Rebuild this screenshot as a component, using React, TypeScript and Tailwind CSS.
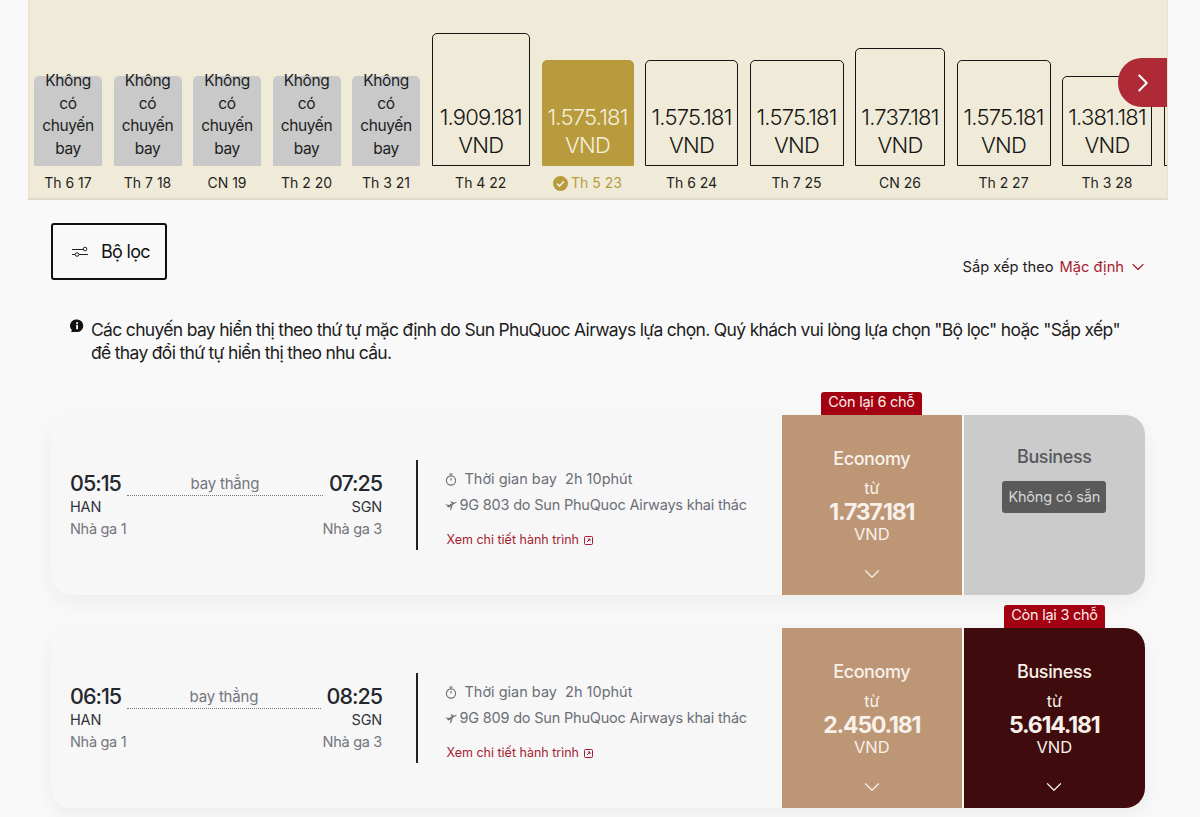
import { ChevronDown, ChevronRight } from "lucide-react";

interface DayBar {
  label: string;
  price?: string;
  width: string;
  height: string;
  selected?: boolean;
}

const DAYS: DayBar[] = [
  { label: "Th 6 17", width: "w-[68px]", height: "h-[90px]" },
  { label: "Th 7 18", width: "w-[68px]", height: "h-[90px]" },
  { label: "CN 19", width: "w-[68px]", height: "h-[90px]" },
  { label: "Th 2 20", width: "w-[68px]", height: "h-[90px]" },
  { label: "Th 3 21", width: "w-[68px]", height: "h-[90px]" },
  { label: "Th 4 22", price: "1.909.181", width: "w-[98.5px]", height: "h-[133px]" },
  { label: "Th 5 23", price: "1.575.181", width: "w-[92px]", height: "h-[106px]", selected: true },
  { label: "Th 6 24", price: "1.575.181", width: "w-[93px]", height: "h-[106px]" },
  { label: "Th 7 25", price: "1.575.181", width: "w-[94px]", height: "h-[106px]" },
  { label: "CN 26", price: "1.737.181", width: "w-[90px]", height: "h-[118px]" },
  { label: "Th 2 27", price: "1.575.181", width: "w-[94px]", height: "h-[106px]" },
  { label: "Th 3 28", price: "1.381.181", width: "w-[90px]", height: "h-[90px]" },
  { label: "", price: "", width: "w-[90px]", height: "h-[90px]" },
];

interface Flight {
  depart: string;
  arrive: string;
  code: string;
  economy: string;
  business?: string;
  seatsLeft: string;
  seatsOn: "economy" | "business";
}

const FLIGHTS: Flight[] = [
  { depart: "05:15", arrive: "07:25", code: "9G 803", economy: "1.737.181", seatsLeft: "Còn lại 6 chỗ", seatsOn: "economy" },
  { depart: "06:15", arrive: "08:25", code: "9G 809", economy: "2.450.181", business: "5.614.181", seatsLeft: "Còn lại 3 chỗ", seatsOn: "business" },
];

function CalendarBar({ day }: { day: DayBar }) {
  return (
    <div className={`${day.width} shrink-0 flex flex-col items-center`}>
      {day.price === undefined ? (
        <div className={`${day.height} w-full bg-[#c9c9c9] rounded-t-[5px] flex flex-col items-center text-[15.5px] leading-[22.6px] tracking-[-0.4px] text-[#1d1d1d] text-center`}>
          <div className="-mt-[6px]">Không</div>
          <div>có</div>
          <div>chuyến</div>
          <div>bay</div>
        </div>
      ) : (
        <div
          className={`${day.height} w-full rounded-t-[5px] border-[1.5px] flex flex-col items-center justify-end pb-[6.5px] text-[22px] leading-[28px] font-[350] tracking-[-0.8px] ${
            day.selected
              ? "bg-[#b89b3d] border-[#b89b3d] text-[#f4efdc]"
              : "border-[#151515] text-[#151515]"
          }`}
        >
          <div>{day.price}</div>
          <div>{day.price ? "VND" : ""}</div>
        </div>
      )}
      <div
        className={`mt-[8px] h-[18px] flex items-center gap-[3px] text-[14px] leading-[18px] whitespace-nowrap ${
          day.selected ? "text-[#b89b3d]" : "text-[#1f1f1f]"
        }`}
      >
        {day.selected && (
          <svg width="15" height="15" viewBox="0 0 16 16" aria-hidden="true">
            <circle cx="8" cy="8" r="8" fill="#b89b3d" />
            <path d="M4.4 8.2l2.5 2.5 4.8-5" fill="none" stroke="#f0ebd8" strokeWidth="1.8" />
          </svg>
        )}
        {day.label}
      </div>
    </div>
  );
}

function FilterIcon() {
  return (
    <svg width="18" height="12" viewBox="0 0 18 12" fill="none" stroke="#222" strokeWidth="1" aria-hidden="true">
      <path d="M1 3.5h11" />
      <circle cx="14" cy="3" r="1.8" />
      <path d="M1 8.5h3" />
      <circle cx="6" cy="8.5" r="1.8" />
      <path d="M8 8.5h9" />
    </svg>
  );
}

function InfoIcon() {
  return (
    <svg width="14" height="14" viewBox="0 0 14 14" aria-hidden="true">
      <path d="M7 .5a6.3 6.3 0 0 1 0 12.6H1l1-1.8A6.3 6.3 0 0 1 7 .5z" fill="#111" />
      <rect x="6.2" y="5.8" width="1.8" height="4.4" fill="#fff" />
      <rect x="6.2" y="3.2" width="1.8" height="1.7" fill="#fff" />
    </svg>
  );
}

function TimerIcon() {
  return (
    <svg width="12" height="13" viewBox="0 0 12 13" fill="none" stroke="#6b6f76" strokeWidth="1.1" aria-hidden="true">
      <circle cx="6" cy="7.5" r="4.6" />
      <path d="M4.4 1h3.2M6 1v1.8M6 7.5V5" />
    </svg>
  );
}

function PlaneIcon() {
  return (
    <svg width="12" height="12" viewBox="0 0 12 12" aria-hidden="true">
      <path d="M.5 5.2l3.6.8L7 4.2 5.2 2.6l1-.3 3.1 1.4 1.8-.9c.5-.2.9.3.4.7L3.6 8.4 1.8 7.8 3 6.9.8 6z" fill="#6b6f76" />
      <path d="M5.6 7l2-1.1-1.4 5-1 .4z" fill="#6b6f76" />
    </svg>
  );
}

function OpenIcon() {
  return (
    <svg width="9" height="9" viewBox="0 0 9 9" fill="none" stroke="#a51c30" strokeWidth="1" aria-hidden="true">
      <rect x=".5" y=".5" width="8" height="8" rx="1" />
      <path d="M3 6l3-3M3.8 3H6v2.2" />
    </svg>
  );
}

function FarePanel({ name, price, tone }: { name: string; price: string; tone: string }) {
  return (
    <div className={`flex-1 flex flex-col items-center text-[#f8f1ea] ${tone}`}>
      <div className="mt-[32px] text-[18px] leading-[24px] font-medium tracking-[-0.4px]">{name}</div>
      <div className="mt-[6px] text-[16px] leading-[22px]">từ</div>
      <div className="text-[23px] leading-[26px] font-bold tracking-[-1.2px]">{price}</div>
      <div className="-mt-[2px] text-[16.5px] leading-[22px]">VND</div>
      <ChevronDown className="mt-[16px]" size={26} strokeWidth={1.1} />
    </div>
  );
}

function FlightCard({ flight }: { flight: Flight }) {
  return (
    <div className="relative h-[180px] ml-[51px] w-[1094px] flex rounded-[20px] bg-[#f7f7f8] shadow-[0_6px_22px_rgba(0,0,0,0.06)]">
      <div className="w-[312px] ml-[19px] pt-[53px] shrink-0">
        <div className="flex items-end justify-between">
          <span className="text-[21.5px] leading-[30px] font-medium tracking-[-1px] text-[#24272c]">{flight.depart}</span>
          <div className="flex-1 mx-[6px] mb-[2px] pb-[1px] border-b-[1.5px] border-dotted border-[#777] text-center text-[15px] leading-[20px] tracking-[-0.2px] text-[#73767c]">
            bay thẳng
          </div>
          <span className="text-[21.5px] leading-[30px] font-medium tracking-[-1px] text-[#24272c]">{flight.arrive}</span>
        </div>
        <div className="flex justify-between text-[14.5px] leading-[21px] text-[#30343a] mt-[-2px] tracking-[-0.2px]">
          <span>HAN</span>
          <span>SGN</span>
        </div>
        <div className="flex justify-between text-[14.5px] leading-[23px] tracking-[-0.3px] text-[#73767c]">
          <span>Nhà ga 1</span>
          <span>Nhà ga 3</span>
        </div>
      </div>
      <div className="ml-[34px] mt-[45px] h-[90px] w-[1.5px] bg-[#222] shrink-0" />
      <div className="ml-[27px] w-[337px] pt-[52px] shrink-0 text-[14.5px] text-[#6b6f76]">
        <div className="flex items-center h-[24px] whitespace-nowrap">
          <TimerIcon />
          <span className="ml-[8px]">Thời gian bay&nbsp; 2h 10phút</span>
        </div>
        <div className="flex items-center gap-[3px] h-[24px] mt-[2px] whitespace-nowrap tracking-[-0.2px]">
          <PlaneIcon />
          <span>{flight.code} do Sun PhuQuoc Airways khai thác</span>
        </div>
        <div className="flex items-center gap-[5px] mt-[13px] ml-[2px] text-[12.5px] leading-[20px] text-[#a51c30] whitespace-nowrap">
          Xem chi tiết hành trình
          <OpenIcon />
        </div>
      </div>
      <div className="w-[363px] flex gap-[2px] rounded-r-[20px] overflow-hidden">
        <FarePanel name="Economy" price={flight.economy} tone="bg-[#bd9676]" />
        {flight.business ? (
          <FarePanel name="Business" price={flight.business} tone="bg-[#3f0b0d]" />
        ) : (
          <div className="flex-1 flex flex-col items-center bg-[#cbcbcb]">
            <div className="mt-[30px] text-[18px] leading-[24px] font-medium tracking-[-0.4px] text-[#55585c]">Business</div>
            <div className="mt-[12px] h-[32px] px-[6px] flex items-center rounded-[3px] bg-[#5a5a5a] text-[14.5px] tracking-[-0.2px] text-[#d7d7d7]">
              Không có sẵn
            </div>
          </div>
        )}
      </div>
      <div
        className={`absolute top-[-23px] h-[23px] w-[101px] pb-[3px] flex items-center justify-center rounded-t-[3px] bg-[#a30012] text-[14.5px] tracking-[-0.25px] text-[#f9efe9] whitespace-nowrap ${
          flight.seatsOn === "economy" ? "left-[770px]" : "left-[953px]"
        }`}
      >
        {flight.seatsLeft}
      </div>
    </div>
  );
}

export default function App() {
  return (
    <div className="h-[817px] w-[1200px] overflow-hidden bg-[#f9f9f9] font-['Inter',sans-serif]">
      <section className="relative ml-[28px] w-[1140px] h-[200px] overflow-hidden bg-[#f0ebd8] border-b-2 border-[#dfdbc8] border-x border-x-[#e6e2cf]">
        <div className="flex items-end gap-[11.5px] h-[198px] pl-[5px] pb-[6px]">
          {DAYS.map((day, i) => (
            <CalendarBar key={i} day={day} />
          ))}
        </div>
        <div className="absolute right-0 top-[58px] h-[49px] w-[49px] flex items-center justify-center rounded-l-[24px] bg-[#ad2a36] text-white">
          <ChevronRight size={30} strokeWidth={1.6} />
        </div>
      </section>

      <div className="flex items-start justify-between pl-[51px] pr-[52px] pt-[23px]">
        <button className="h-[57px] w-[116px] flex items-center justify-start pl-[18px] gap-[12px] border-2 border-[#111] rounded-[3px] text-[18px] tracking-[-0.7px] text-[#111]">
          <FilterIcon />
          Bộ lọc
        </button>
        <div className="mt-[33px] flex items-center text-[14.7px] leading-[22px] text-[#1c1c1c]">
          Sắp xếp theo
          <span className="ml-[6px] text-[#a51c30]">Mặc định</span>
          <ChevronDown className="ml-[4px] text-[#a51c30]" size={20} strokeWidth={1.3} />
        </div>
      </div>

      <div className="mt-[38px] ml-[70px] w-[1060px] flex gap-[7px] text-[17.5px] leading-[23px] tracking-[-0.68px] text-[#1c1c1c]">
        <span className="mt-[1px] shrink-0">
          <InfoIcon />
        </span>
        <p>
          Các chuyến bay hiển thị theo thứ tự mặc định do Sun PhuQuoc Airways lựa chọn. Quý khách vui lòng lựa chọn "Bộ lọc" hoặc "Sắp xếp" để thay đổi thứ tự hiển thị theo nhu cầu.
        </p>
      </div>

      <div className="mt-[51px] flex flex-col gap-[33px]">
        {FLIGHTS.map((flight) => (
          <FlightCard key={flight.code} flight={flight} />
        ))}
      </div>
    </div>
  );
}
